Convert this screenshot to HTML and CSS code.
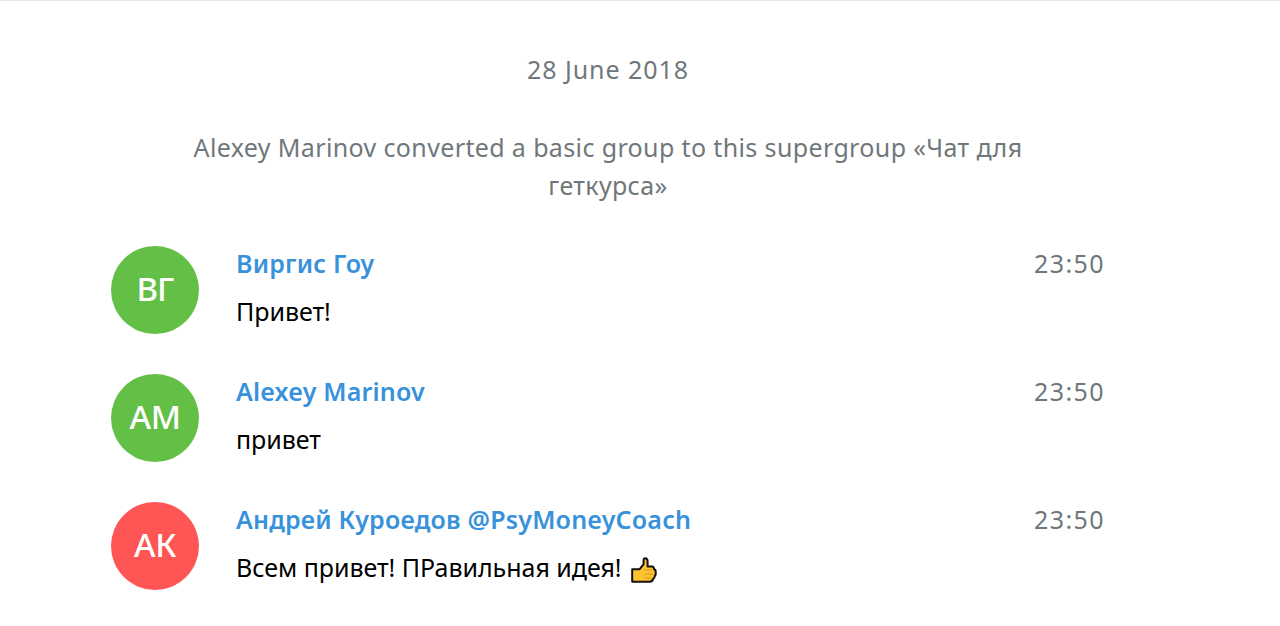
FILE: index.html
```html
<!DOCTYPE html>
<html lang="en">
<head>
    <meta charset="UTF-8">
    <meta name="viewport" content="width=device-width, initial-scale=1.0">
    <title>Exported Data</title>
    <link rel="stylesheet" href="styles.css">
</head>
<body>
    <div class="page_body">
        <div class="history">
            <div class="service date">28 June 2018</div>
            <div class="service">Alexey Marinov converted a basic group to this supergroup «Чат для геткурса»</div>

            <div class="message">
                <div class="userpic green narrow">ВГ</div>
                <div class="body">
                    <div class="head">
                        <div class="from_name">Виргис Гоу</div>
                        <div class="time">23:50</div>
                    </div>
                    <div class="text">Привет!</div>
                </div>
            </div>

            <div class="message">
                <div class="userpic green">AM</div>
                <div class="body">
                    <div class="head">
                        <div class="from_name">Alexey Marinov</div>
                        <div class="time">23:50</div>
                    </div>
                    <div class="text">привет</div>
                </div>
            </div>

            <div class="message">
                <div class="userpic red">АК</div>
                <div class="body">
                    <div class="head">
                        <div class="from_name">Андрей Куроедов @PsyMoneyCoach</div>
                        <div class="time">23:50</div>
                    </div>
                    <div class="text">Всем привет! ПРавильная идея!
                        <svg class="emoji" viewBox="0 0 26 26" aria-label="thumbs up">
                            <path d="M1.2 12.3H8.5L12.6 7.2V2.6Q12.8 1.2 14.2 1.2Q16.6 1.4 16.6 4.2V9.6H21Q23.2 9.8 23 12Q25.2 13 24.6 15.4Q25.2 17.6 23.8 19Q23.8 21 22.2 21.8Q21.6 24.6 18.8 24.7H1.2Z" fill="#fdc431" stroke="#111" stroke-width="2" stroke-linejoin="round"/>
                            <path d="M12.5 13H21.8M13.5 17.2H22.6M13.5 21H21" fill="none" stroke="#d99422" stroke-width="1"/>
                        </svg>
                    </div>
                </div>
            </div>
        </div>
    </div>
</body>
</html>
```
FILE: styles.css
```css
body {
    margin: 0;
    font-family: "Noto Sans", "Open Sans", sans-serif;
    font-size: 25px;
    line-height: 38px;
    color: #000;
    background-color: #fff;
}

.page_body {
    box-sizing: border-box;
    height: 626px;
    padding: 49px 0 0 111px;
    border-top: 1px solid #e3e6e8;
    overflow: hidden;
}

.history {
    width: 994px;
}

.service {
    padding: 0 75px;
    margin-bottom: 42px;
    text-align: center;
    color: #70777b;
    letter-spacing: 0.37px;
}

.date {
    margin-bottom: 40px;
    letter-spacing: 0.95px;
}

.message {
    display: flex;
    gap: 37px;
    height: 88px;
    margin-bottom: 40px;
}

.userpic {
    box-sizing: border-box;
    flex-shrink: 0;
    width: 88px;
    height: 88px;
    border-radius: 50%;
    color: #fff;
    font-size: 33px;
    font-weight: 500;
    line-height: 85px;
    text-align: center;
    letter-spacing: -0.5px;
}

.narrow {
    letter-spacing: -1px;
}

.green {
    background-color: #64bf47;
}

.red {
    background-color: #ff5555;
}

.body {
    flex: 1;
}

.head {
    display: flex;
    justify-content: space-between;
    margin-top: -2px;
    margin-bottom: 10px;
}

.from_name {
    color: #3892db;
    font-weight: 600;
    letter-spacing: 0.2px;
}

.time {
    color: #70777b;
    letter-spacing: 1.4px;
}

.text {
    letter-spacing: -0.03px;
}

.emoji {
    width: 26px;
    height: 26px;
    margin-left: 3px;
    vertical-align: -6px;
}
```
